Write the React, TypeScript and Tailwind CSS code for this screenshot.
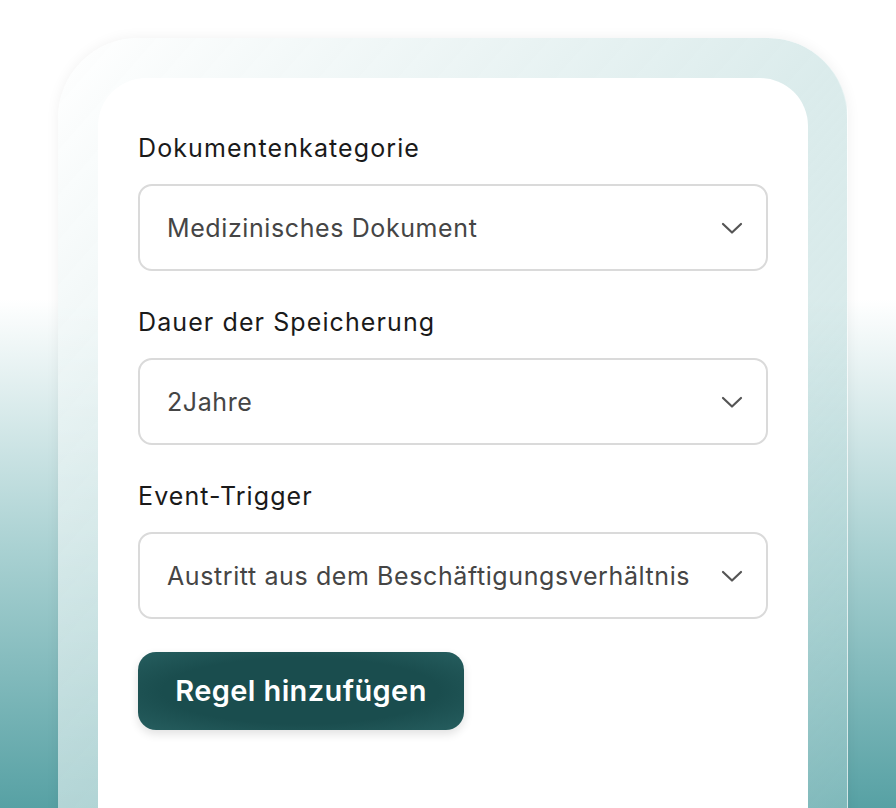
import React from "react";

function Chevron() {
  return (
    <svg width="22" height="14" viewBox="0 0 22 14" fill="none" className="shrink-0">
      <path d="M2 3 L11 11.5 L20 3" stroke="#555555" strokeWidth="2.2" strokeLinecap="round" strokeLinejoin="round" />
    </svg>
  );
}

function Field({ label, value }: { label: string; value: string }) {
  return (
    <div className="flex flex-col">
      <div className="text-[25px] leading-[32px] text-[#1a1a1a] tracking-[1.1px]">{label}</div>
      <div className="mt-[20px] h-[87px] rounded-[14px] border-2 border-[#dadada] bg-white flex items-center justify-between pl-[27px] pr-[23px]">
        <span className="mt-[3px] text-[25px] text-[#454545] tracking-[0.6px]">{value}</span>
        <Chevron />
      </div>
    </div>
  );
}

export default function App() {
  return (
    <div
      className="w-[896px] h-[808px] overflow-hidden bg-[linear-gradient(to_bottom,#ffffff_0%,#ffffff_37%,#a9d1d2_68%,#57a1a4_100%)] pt-[38px] pl-[58px]"
      style={{ fontFamily: "Inter, 'Noto Sans', sans-serif" }}
    >
      <div className="w-[790px] h-[900px] rounded-t-[80px] bg-[linear-gradient(to_bottom_right,rgba(255,255,255,0.8)_0%,rgba(205,228,228,0.72)_50%,rgba(160,205,206,0.45)_100%)] shadow-[0_0_14px_rgba(0,0,0,0.06)] pt-[40px] px-[40px] border-r border-white/40">
        <div className="w-[710px] h-[900px] rounded-t-[48px] bg-white pt-[54px] px-[40px]">
          <div className="flex flex-col gap-[35px]">
            <Field label="Dokumentenkategorie" value="Medizinisches Dokument" />
            <Field label="Dauer der Speicherung" value="2Jahre" />
            <Field label="Event-Trigger" value="Austritt aus dem Beschäftigungsverhältnis" />
          </div>
          <button className="mt-[33px] h-[78px] w-[326px] flex items-center justify-center rounded-[18px] bg-[radial-gradient(ellipse_at_center,#1a4d4e_60%,#265e5f_100%)] text-white text-[29px] font-semibold tracking-[0.4px] shadow-[0_4px_10px_rgba(0,0,0,0.12)]">
            Regel hinzufügen
          </button>
        </div>
      </div>
    </div>
  );
}
